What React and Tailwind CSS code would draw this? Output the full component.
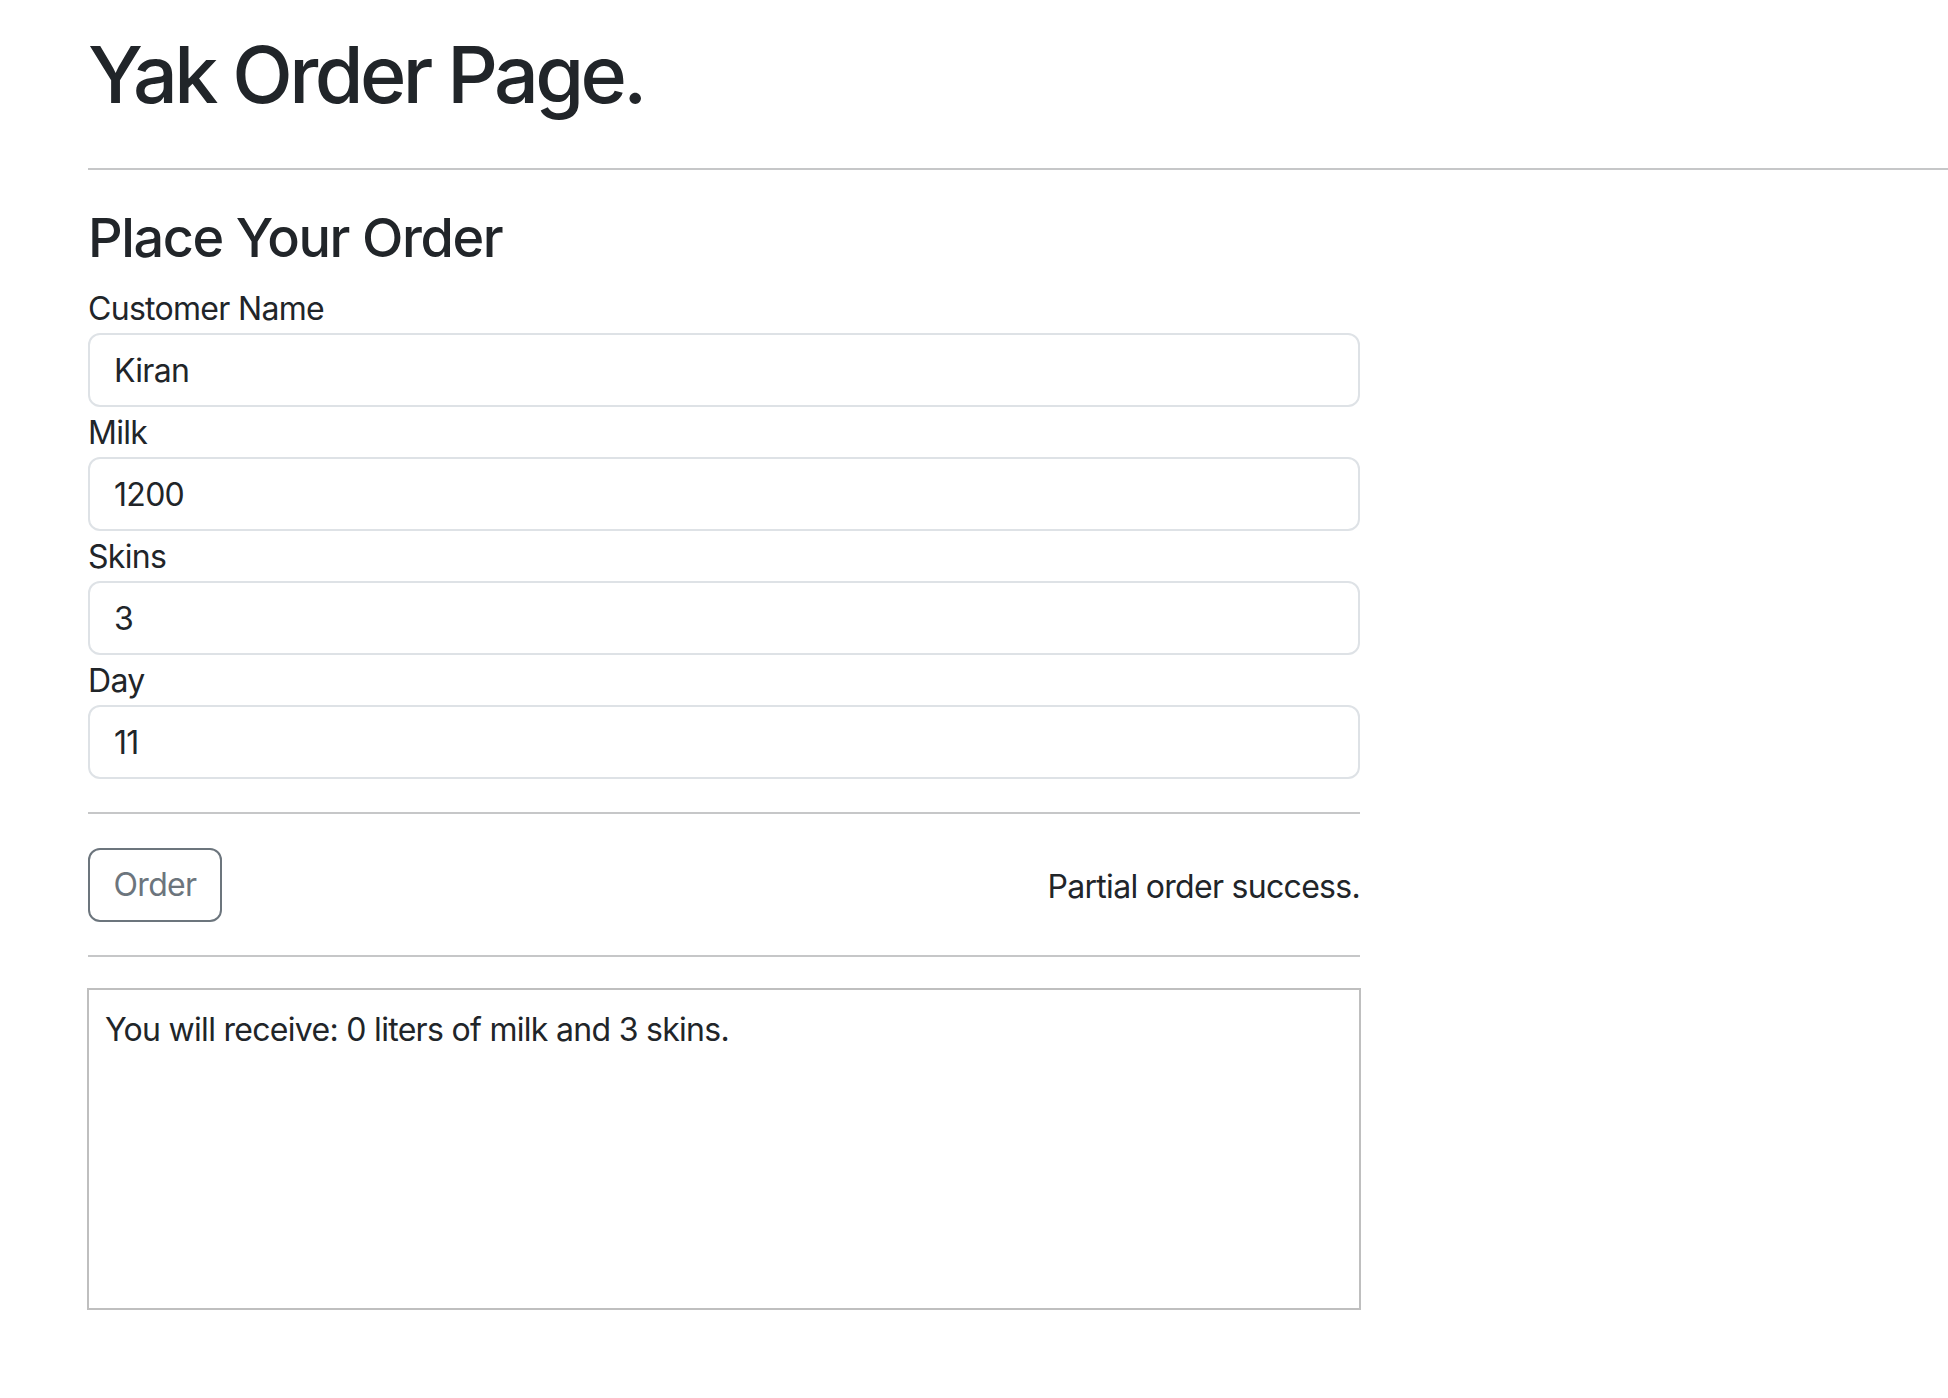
export default function App() {
  const fields = [
    { label: "Customer Name", value: "Kiran" },
    { label: "Milk", value: "1200" },
    { label: "Skins", value: "3" },
    { label: "Day", value: "11" },
  ];
  return (
    <div
      className="min-h-[1398px] bg-white text-[#212529] pl-[88px] tracking-[-0.7px]"
      style={{ fontFamily: "Inter, 'Open Sans', sans-serif" }}
    >
      <h1 className="pt-[26px] text-[79px] leading-[96px] font-medium tracking-[-3.6px]">
        Yak Order Page.
      </h1>
      <div className="mt-[46px] h-[2px] bg-[#c6c7c8]" />
      <div className="w-[1272px]">
        <h2 className="mt-[35px] text-[54px] leading-[65px] font-medium tracking-[-1.4px]">
          Place Your Order
        </h2>
        <div className="mt-[13px] flex flex-col">
          {fields.map((f) => (
            <div key={f.label} className="flex flex-col">
              <label className="pt-[2px] text-[32px] leading-[48px]">{f.label}</label>
              <input
                readOnly
                value={f.value}
                className="h-[74px] w-full rounded-[12px] border-2 border-[#dee2e6] bg-white px-[24px] text-[32px] tracking-[-0.7px] text-[#212529] outline-none"
                style={{ fontFamily: "Inter, 'Open Sans', sans-serif" }}
              />
            </div>
          ))}
        </div>
        <div className="mt-[33px] h-[2px] bg-[#c6c7c8]" />
        <div className="mt-[34px] flex items-center justify-between">
          <button className="h-[74px] w-[134px] rounded-[12px] border-2 border-[#6c757d] text-[32px] tracking-[-0.7px] text-[#6c757d] bg-white">
            Order
          </button>
          <span className="text-[32px] leading-[48px] pt-[4px]">Partial order success.</span>
        </div>
        <div className="mt-[33px] h-[2px] bg-[#c6c7c8]" />
        <div className="mt-[31px] -mx-px h-[322px] border-2 border-[#bfbfbf] p-4 text-[32px] leading-[48px]">
          You will receive: 0 liters of milk and 3 skins.
        </div>
      </div>
    </div>
  );
}
